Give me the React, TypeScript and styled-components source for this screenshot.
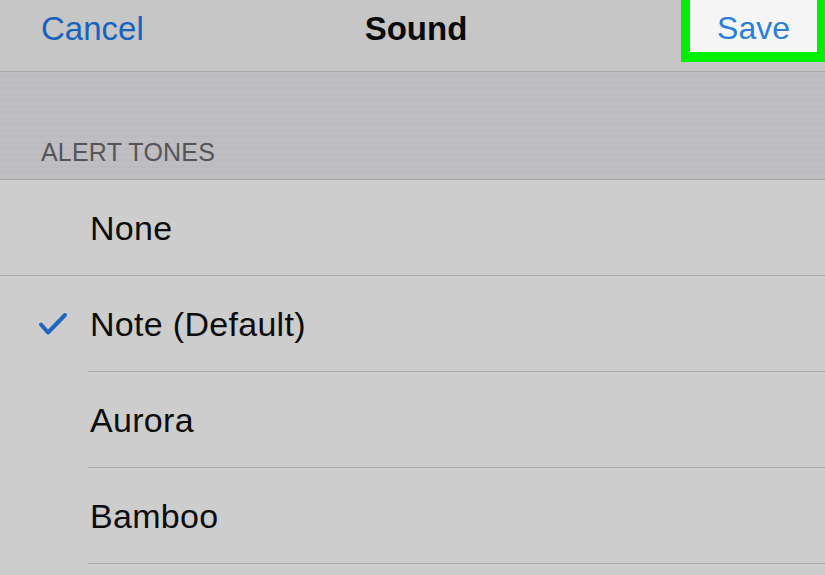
import React from 'react';
import styled, { createGlobalStyle } from 'styled-components';

const GlobalStyle = createGlobalStyle`
  html, body {
    margin: 0;
    padding: 0;
    background: #cdcdcd;
    overflow: hidden;
  }
  body {
    font-family: "Liberation Sans", Arial, sans-serif;
    -webkit-font-smoothing: antialiased;
  }
`;

const tones = [
  { name: 'None', selected: false, full: true },
  { name: 'Note (Default)', selected: true, full: false },
  { name: 'Aurora', selected: false, full: false },
  { name: 'Bamboo', selected: false, full: false },
];

const Screen = styled.div`
  width: 825px;
  height: 575px;
  display: flex;
  flex-direction: column;
  background: #cdcdcd;
  overflow: hidden;
`;

const NavBar = styled.header`
  height: 71px;
  flex-shrink: 0;
  display: grid;
  grid-template-columns: 1fr auto 1fr;
  align-items: start;
  background: #c6c6c6;
  border-bottom: 1px solid #a9a9a9;
`;

const NavButton = styled.span`
  font-size: 33px;
  line-height: 58px;
  color: #1862bd;
  padding-left: 41px;
`;

const Title = styled.h1`
  margin: 0;
  padding-left: 7px;
  font-size: 33px;
  line-height: 58px;
  font-weight: 700;
  color: #0a0a0a;
`;

const Highlight = styled.div`
  justify-self: end;
  box-sizing: border-box;
  width: 144px;
  height: 62px;
  padding-top: 3px;
  border: solid #00f000;
  border-width: 0 8px 10px 9px;
  background: #f5f5f5;
  display: flex;
  justify-content: center;
  font-size: 32px;
  line-height: 50px;
  color: #2b7fd6;
`;

const SectionHeader = styled.div`
  height: 108px;
  flex-shrink: 0;
  box-sizing: border-box;
  display: flex;
  align-items: flex-end;
  padding: 0 41px 12px;
  background: repeating-linear-gradient(
    to bottom,
    #bfbfc3 0px,
    #bfbfc3 3px,
    #bcbcc0 3px,
    #bcbcc0 6px
  );
  border-bottom: 1px solid #a9a9a9;
  font-size: 25px;
  line-height: 30px;
  color: #555559;
  letter-spacing: 0.2px;
`;

const Row = styled.div<{ $full: boolean }>`
  display: flex;
  flex-shrink: 0;
  height: 96px;
  box-sizing: border-box;
  border-bottom: ${(p) => (p.$full ? '1px solid #a9a9a9' : '0')};
`;

const Lead = styled.div`
  width: 88px;
  flex-shrink: 0;
  display: flex;
  align-items: center;
  padding: 2px 0 0 38px;
  box-sizing: border-box;
`;

const Content = styled.div<{ $divider: boolean }>`
  flex: 1;
  display: flex;
  align-items: center;
  padding: 2px 0 0 2px;
  font-size: 34px;
  letter-spacing: 0.3px;
  color: #0c0c0c;
  border-bottom: ${(p) => (p.$divider ? '1px solid #a9a9a9' : '0')};
`;

const Check = () => (
  <svg width="30" height="26" viewBox="0 0 30 26">
    <path
      d="M3 12.5 L10 20.5 L27 3"
      fill="none"
      stroke="#1f66c2"
      strokeWidth="4"
      strokeLinecap="round"
      strokeLinejoin="round"
    />
  </svg>
);

export default function App() {
  return (
    <>
      <GlobalStyle />
      <Screen>
        <NavBar>
          <NavButton>Cancel</NavButton>
          <Title>Sound</Title>
          <Highlight>Save</Highlight>
        </NavBar>
        <SectionHeader>ALERT TONES</SectionHeader>
        {tones.map((t) => (
          <Row key={t.name} $full={t.full}>
            <Lead>{t.selected && <Check />}</Lead>
            <Content $divider={!t.full}>{t.name}</Content>
          </Row>
        ))}
      </Screen>
    </>
  );
}
